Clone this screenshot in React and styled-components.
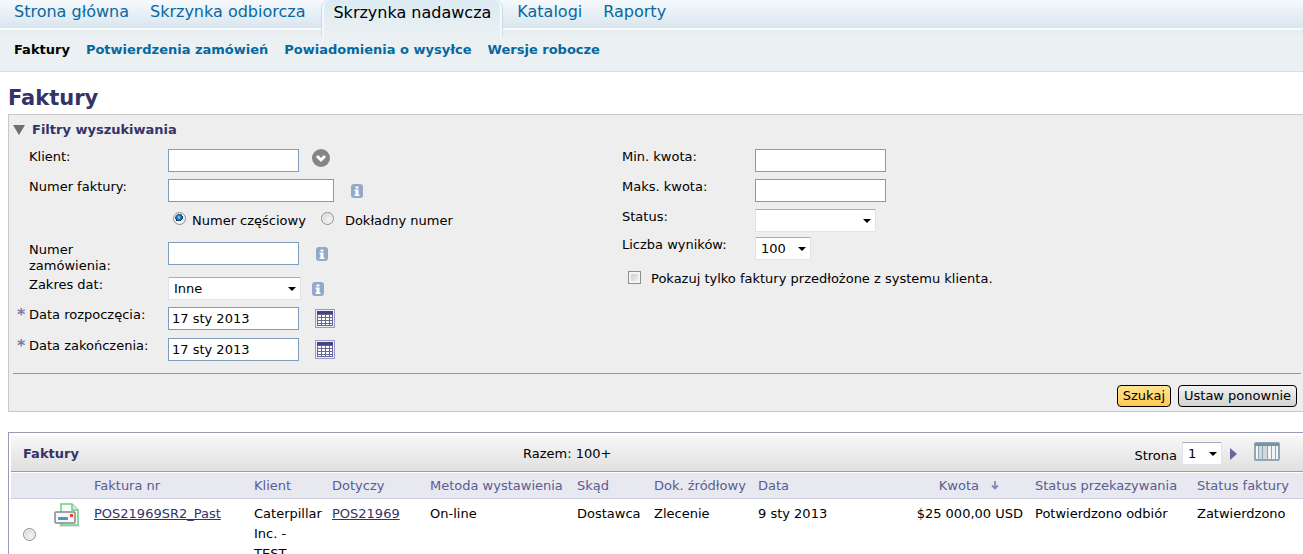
import React, { useState } from "react";
import styled, { createGlobalStyle, css } from "styled-components";

const GlobalStyle = createGlobalStyle`
  * {
    box-sizing: border-box;
  }
  body {
    margin: 0;
    background: #fff;
    color: #000;
    font: 13px/16px Verdana, "DejaVu Sans", sans-serif;
  }
  input, select, button {
    font: inherit;
    color: inherit;
    margin: 0;
  }
`;

const TopNav = styled.nav`
  display: flex;
  height: 36px;
  padding-left: 14px;
  font-size: 16px;
  line-height: 24px;
  white-space: nowrap;
  background: linear-gradient(#f5f9fc 0, #d9e6ef 28px, #f8fbfc 28px, #f8fbfc 30px, #e6ebee 30px, #ebeff1 36px);

  a {
    color: #0768a0;
    text-decoration: none;
    margin-right: 21px;
  }
  a.active {
    color: #000;
    padding: 0 9px;
    margin: 0 15px 0 -4px;
    line-height: 25px;
    background: linear-gradient(#dcebf3, #ebf0f2);
    border: solid #f4f8fa;
    border-width: 0 2px;
    border-radius: 8px 8px 0 0;
    box-shadow: -1px 0 #c8d9e4, 1px 0 #c8d9e4;
  }
`;

const SubNav = styled.nav`
  display: flex;
  gap: 16px;
  height: 36px;
  padding: 6px 14px 0;
  font-weight: bold;
  white-space: nowrap;
  background: #ebf0f2;
  border-bottom: 1px solid #d8dfe3;

  a {
    color: #0768a0;
    text-decoration: none;
  }
  a.active {
    color: #000;
  }
`;

const Content = styled.main`
  padding: 14px 0 0 8px;
`;

const PageTitle = styled.h1`
  margin: 0 0 4px;
  font-size: 21px;
  line-height: 24px;
  color: #333366;
`;

const Filters = styled.section`
  background: #eee;
  border: 1px solid #c8c8c8;
  border-right: 0;
  padding: 7px 2px 4px 4px;
`;

const FilterToggle = styled.button`
  display: flex;
  align-items: center;
  gap: 7px;
  height: 16px;
  padding: 0;
  margin-bottom: 11px;
  border: 0;
  background: none;
  color: #333366;
  font-weight: bold;
`;

const Columns = styled.div`
  display: grid;
  grid-template-columns: 593px 1fr;
`;

const Field = styled.div`
  display: grid;
  grid-template-columns: ${props => props.$labelWidth || "155px"} 1fr;
  align-items: start;
  height: ${props => props.$height || "30px"};
`;

const Label = styled.label`
  padding-left: 16px;
  max-width: ${props => props.$narrow ? "120px" : "none"};
`;

const RequiredLabel = styled(Label)`
  display: flex;
  padding-left: 4px;

  span {
    width: 12px;
    color: #7878aa;
    font-size: 16px;
    font-weight: bold;
  }
`;

const Control = styled.div`
  display: flex;
  align-items: ${props => props.$top ? "flex-start" : "center"};
  gap: ${props => props.$gap || "16px"};
`;

const TextInput = styled.input`
  width: ${props => props.$wide ? "166px" : "131px"};
  height: 23px;
  padding: 0 3px;
  border: 1px solid #7f9db9;
  background: #fff;
`;

const SelectBox = styled.span`
  position: relative;
  display: inline-block;
  width: ${props => props.$width};
  height: 23px;

  select {
    appearance: none;
    width: 100%;
    height: 100%;
    padding: 0 5px;
    border: 1px solid #e2e3ea;
    border-top-color: #abadb3;
    border-radius: 1px;
    background: #fff;
  }
  &:after {
    content: "";
    position: absolute;
    right: 5px;
    top: 10px;
    border: 4px solid transparent;
    border-top-color: #000;
    border-bottom: 0;
    pointer-events: none;
  }
`;

const tick = css`
  appearance: none;
  flex: none;
  width: 13px;
  height: 13px;
`;

const Radio = styled.input`
  ${tick}
  border: 1px solid #8e8f8f;
  border-radius: 50%;
  background: radial-gradient(circle at 60% 60%, #f4f4f4, #cfcfcf);
  box-shadow: inset 0 0 0 1px #f4f4f4;

  &:checked {
    background: radial-gradient(circle at 45% 40%, #9fe0f7 0, #1b7fb2 2px, #0b2f4c 4px, #eee 4px);
  }
`;

const Checkbox = styled.input`
  ${tick}
  border: 1px solid #8e8f8f;
  background: linear-gradient(135deg, #c5c9cd, #f6f6f6);
  box-shadow: inset 0 0 0 2px #f4f4f4;
`;

const RadioRow = styled.div`
  display: flex;
  height: 33px;
  padding: 3px 0 0 160px;

  label {
    display: flex;
    gap: 6px;
    margin-right: 15px;
  }
  label + label {
    gap: 11px;
  }
  span {
    padding-top: 1px;
  }
`;

const CheckRow = styled.label`
  display: flex;
  gap: 10px;
  padding: 6px 0 0 22px;
`;

const IconButton = styled.button`
  display: flex;
  padding: 0;
  border: 0;
  background: none;
`;

const Actions = styled.div`
  display: flex;
  justify-content: flex-end;
  gap: 7px;
  padding: 11px 4px 0 0;
  border-top: 1px solid #999;
`;

const Button = styled.button`
  height: 22px;
  padding: 0 5px;
  border: 1px solid #000;
  border-radius: 4px;
  background: ${props => props.$primary
    ? "linear-gradient(#ffe391, #ffcb52)"
    : "linear-gradient(#f2f2f2, #d2d2d2)"};
`;

const Results = styled.section`
  margin-top: 20px;
  border: solid #9999b8;
  border-width: 1px 0 0 1px;
  padding: 3px 0 0 2px;
`;

const ResultsBar = styled.div`
  display: grid;
  grid-template-columns: 512px 1fr auto;
  align-items: center;
  height: 36px;
  padding: 0 23px 0 0;
  background: linear-gradient(#f7f7f7, #e0e0e0);
  border-bottom: 1px solid #9999b8;

  h2 {
    margin: 0;
    padding-left: 12px;
    font-size: 13px;
    color: #333366;
  }
`;

const Pager = styled.div`
  display: flex;
  align-items: center;

  label {
    padding: 4px 5px 0 0;
  }
  button {
    margin-left: 8px;
  }
  button + button {
    margin: 0 0 4px 17px;
  }
`;

const Table = styled.table`
  width: 100%;
  table-layout: fixed;
  border-collapse: collapse;
  border-top: 1px solid #fff;

  th {
    height: 26px;
    padding: 0 6px;
    background: #e8e8f1;
    border-bottom: 1px solid #ccccdd;
    color: #5c5c8f;
    font-weight: normal;
    text-align: left;
    white-space: nowrap;
  }
  td {
    padding: 5px 6px;
    line-height: 20px;
    vertical-align: top;
    white-space: nowrap;
  }
  .number {
    text-align: right;
  }
  th.number svg {
    margin: 0 24px 0 12px;
  }
  td.client {
    white-space: normal;
  }
  td.pick {
    padding-left: 12px;
    vertical-align: middle;
  }
  td.icon {
    padding-top: 4px;
  }
  td.pick input {
    display: block;
  }
  td a {
    color: #333366;
  }
`;

const Triangle = () => (
  <svg width="12" height="10" viewBox="0 0 12 10" aria-hidden="true">
    <path d="M0 0h12L6 10z" fill="#707070" />
  </svg>
);

const InfoIcon = () => (
  <svg width="14" height="14" viewBox="0 0 14 14" aria-hidden="true">
    <rect x="1" width="12" height="14" rx="3" fill="#93a9c9" />
    <path d="M5.500 2.500h3v2h-3zM4.500 5.500h4v5h1v1.500h-5v-1.500h1v-3.500h-1z" fill="#fff" />
  </svg>
);

const ChooserIcon = () => (
  <svg width="18" height="18" viewBox="0 0 18 18" aria-hidden="true">
    <circle cx="9" cy="9" r="9" fill="#858585" />
    <path d="M5 7l4 4 4-4" fill="none" stroke="#fff" strokeWidth="3" />
  </svg>
);

const CalendarIcon = () => (
  <svg width="20" height="19" viewBox="0 0 20 19" shapeRendering="crispEdges" aria-hidden="true">
    <path d="M0 0h20v19H0z" fill="#9999cc" />
    <path d="M1 1h18v17H1z" fill="#eeeef6" />
    <path d="M2 2h16v15H2z" fill="#666699" />
    <path d="M2 2h16v3H2z" fill="#444480" />
    <path
      d="M3 6h3v2H3zM7 6h3v2H7zM11 6h3v2h-3zM15 6h2v2h-2zM3 9h3v2H3zM7 9h3v2H7zM11 9h3v2h-3zM15 9h2v2h-2zM3 12h3v2H3zM7 12h3v2H7zM11 12h3v2h-3zM15 12h2v2h-2zM3 15h3v1H3zM7 15h3v1H7zM11 15h3v1h-3zM15 15h2v1h-2z"
      fill="#fff"
    />
  </svg>
);

const NextIcon = () => (
  <svg width="7" height="12" viewBox="0 0 7 12" aria-hidden="true">
    <path d="M0 0l7 6-7 6z" fill="#6666a0" />
  </svg>
);

const ColumnsIcon = () => (
  <svg width="26" height="19" viewBox="0 0 26 19" aria-hidden="true">
    <rect width="26" height="19" rx="2" fill="#8fa6b4" />
    <path d="M1 1h24v3H1z" fill="#7893a4" />
    <path d="M2 4h2v13H2zM14 4h3v13h-3zM18 4h3v13h-3zM22 4h2v13h-2z" fill="#f2f5f6" />
    <path d="M5 4h3v13H5zM9 4h4v13H9z" fill="#d3d8db" />
  </svg>
);

const SortIcon = () => (
  <svg width="8" height="9" viewBox="0 0 8 9" aria-hidden="true">
    <path d="M4 0v7M1 4.500l3 3 3-3" fill="none" stroke="#8888bb" strokeWidth="1.800" />
  </svg>
);

const PrinterIcon = () => (
  <svg width="27" height="25" viewBox="0 0 27 25" aria-hidden="true">
    <path d="M5 22h21v2H5z" fill="#e2e2e2" />
    <path d="M7 1h11l6 6v15H7z" fill="#f6fff8" stroke="#6fca8e" strokeWidth="1.500" />
    <path d="M18 1v6h6" fill="#d3f2dc" stroke="#6fca8e" strokeWidth="1.500" />
    <rect x="1" y="9" width="20" height="11" rx="1" fill="#f7f7f9" stroke="#85858f" strokeWidth="1.500" />
    <rect x="4" y="14" width="10" height="3" rx="1" fill="#3d9cc4" />
    <path d="M16 11h3v3h-3z" fill="#f04818" />
  </svg>
);

const Info = () => (
  <IconButton type="button" aria-label="Informacje"><InfoIcon /></IconButton>
);

const columnWidths = [37, 40, 160, 78, 98, 147, 77, 104, null, 135, 162, 112];

const invoices = [
  {
    number: "POS21969SR2_Past",
    client: "Caterpillar Inc. - TEST",
    order: "POS21969",
    method: "On-line",
    from: "Dostawca",
    source: "Zlecenie",
    date: "9 sty 2013",
    amount: "$25 000,00 USD",
    routing: "Potwierdzono odbiór",
    status: "Zatwierdzono",
  },
];

const App = () => {
  const [ match, setMatch ] = useState("partial");
  const [ open, setOpen ] = useState(true);

  return (
    <>
      <GlobalStyle />
      <TopNav>
        <a href="#home">Strona główna</a>
        <a href="#inbox">Skrzynka odbiorcza</a>
        <a href="#outbox" className="active">Skrzynka nadawcza</a>
        <a href="#catalogs">Katalogi</a>
        <a href="#reports">Raporty</a>
      </TopNav>
      <SubNav>
        <a href="#invoices" className="active">Faktury</a>
        <a href="#confirmations">Potwierdzenia zamówień</a>
        <a href="#shipping">Powiadomienia o wysyłce</a>
        <a href="#drafts">Wersje robocze</a>
      </SubNav>
      <Content>
        <PageTitle>Faktury</PageTitle>
        <Filters>
          <FilterToggle type="button" aria-expanded={open} onClick={() => setOpen(!open)}>
            <Triangle />Filtry wyszukiwania
          </FilterToggle>
          {open && (
            <Columns>
              <div>
                <Field>
                  <Label htmlFor="client">Klient:</Label>
                  <Control $gap="13px" $top>
                    <TextInput id="client" />
                    <IconButton type="button" aria-label="Wybierz klienta"><ChooserIcon /></IconButton>
                  </Control>
                </Field>
                <Field>
                  <Label htmlFor="invoice">Numer faktury:</Label>
                  <Control>
                    <TextInput id="invoice" $wide />
                    <Info />
                  </Control>
                </Field>
                <RadioRow>
                  <label>
                    <Radio type="radio" name="match" checked={match === "partial"} onChange={() => setMatch("partial")} />
                    <span>Numer częściowy</span>
                  </label>
                  <label>
                    <Radio type="radio" name="match" checked={match === "exact"} onChange={() => setMatch("exact")} />
                    <span>Dokładny numer</span>
                  </label>
                </RadioRow>
                <Field $height="35px">
                  <Label htmlFor="order" $narrow>Numer zamówienia:</Label>
                  <Control>
                    <TextInput id="order" />
                    <Info />
                  </Control>
                </Field>
                <Field>
                  <Label htmlFor="range">Zakres dat:</Label>
                  <Control $gap="10px">
                    <SelectBox $width="133px">
                      <select id="range"><option>Inne</option></select>
                    </SelectBox>
                    <Info />
                  </Control>
                </Field>
                <Field $height="31px">
                  <RequiredLabel htmlFor="from"><span>*</span>Data rozpoczęcia:</RequiredLabel>
                  <Control>
                    <TextInput id="from" defaultValue="17 sty 2013" />
                    <IconButton type="button" aria-label="Kalendarz"><CalendarIcon /></IconButton>
                  </Control>
                </Field>
                <Field $height="35px">
                  <RequiredLabel htmlFor="to"><span>*</span>Data zakończenia:</RequiredLabel>
                  <Control>
                    <TextInput id="to" defaultValue="17 sty 2013" />
                    <IconButton type="button" aria-label="Kalendarz"><CalendarIcon /></IconButton>
                  </Control>
                </Field>
              </div>
              <div>
                <Field $labelWidth="149px">
                  <Label htmlFor="min">Min. kwota:</Label>
                  <Control><TextInput id="min" /></Control>
                </Field>
                <Field $labelWidth="149px">
                  <Label htmlFor="max">Maks. kwota:</Label>
                  <Control><TextInput id="max" /></Control>
                </Field>
                <Field $labelWidth="149px" $height="28px">
                  <Label htmlFor="status">Status:</Label>
                  <SelectBox $width="121px">
                    <select id="status"><option></option></select>
                  </SelectBox>
                </Field>
                <Field $labelWidth="149px" $height="28px">
                  <Label htmlFor="limit">Liczba wyników:</Label>
                  <SelectBox $width="56px">
                    <select id="limit"><option>100</option></select>
                  </SelectBox>
                </Field>
                <CheckRow>
                  <Checkbox type="checkbox" />
                  Pokazuj tylko faktury przedłożone z systemu klienta.
                </CheckRow>
              </div>
            </Columns>
          )}
          <Actions>
            <Button type="button" $primary>Szukaj</Button>
            <Button type="button">Ustaw ponownie</Button>
          </Actions>
        </Filters>
        <Results>
          <ResultsBar>
            <h2>Faktury</h2>
            <span>Razem: 100+</span>
            <Pager>
              <label htmlFor="page">Strona</label>
              <SelectBox $width="40px">
                <select id="page"><option>1</option></select>
              </SelectBox>
              <IconButton type="button" aria-label="Następna strona"><NextIcon /></IconButton>
              <IconButton type="button" aria-label="Kolumny"><ColumnsIcon /></IconButton>
            </Pager>
          </ResultsBar>
          <Table>
            <colgroup>
              {columnWidths.map((width, i) => <col key={i} width={width || undefined} />)}
            </colgroup>
            <thead>
              <tr>
                <th></th>
                <th></th>
                <th>Faktura nr</th>
                <th>Klient</th>
                <th>Dotyczy</th>
                <th>Metoda wystawienia</th>
                <th>Skąd</th>
                <th>Dok. źródłowy</th>
                <th>Data</th>
                <th className="number">Kwota<SortIcon /></th>
                <th>Status przekazywania</th>
                <th>Status faktury</th>
              </tr>
            </thead>
            <tbody>
              {invoices.map(row => (
                <tr key={row.number}>
                  <td className="pick"><Radio type="radio" name="row" aria-label={row.number} /></td>
                  <td className="icon"><PrinterIcon /></td>
                  <td><a href="#invoice">{row.number}</a></td>
                  <td className="client">{row.client}</td>
                  <td><a href="#order">{row.order}</a></td>
                  <td>{row.method}</td>
                  <td>{row.from}</td>
                  <td>{row.source}</td>
                  <td>{row.date}</td>
                  <td className="number">{row.amount}</td>
                  <td>{row.routing}</td>
                  <td>{row.status}</td>
                </tr>
              ))}
            </tbody>
          </Table>
        </Results>
      </Content>
    </>
  );
};

export default App;
